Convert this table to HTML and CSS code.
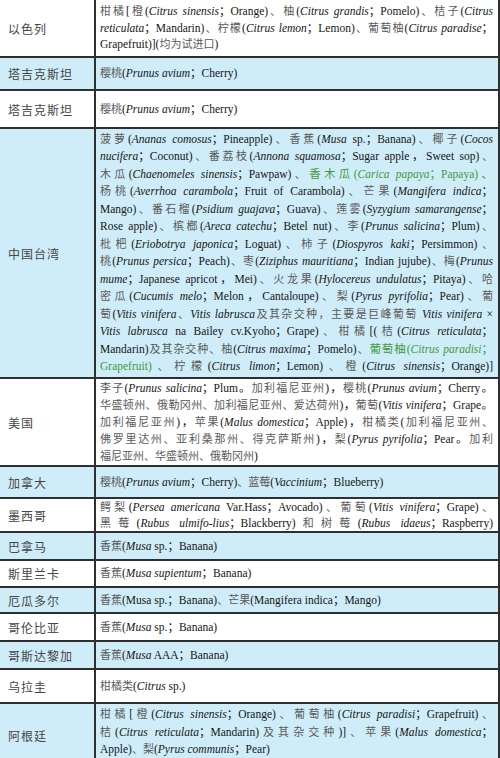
FILE: index.html
```html
<!DOCTYPE html>
<html lang="zh">
<head>
<meta charset="utf-8">
<title>准入水果</title>
<link rel="stylesheet" href="styles.css">
</head>
<body>
<div class="tbl">
  <div class="row h58">
    <div class="cty">以色列</div>
    <div class="txt lh165">
      <div class="ln"><span class="z">柑橘</span>[<span class="z">橙</span>(<i>Citrus sinensis</i>；Orange)<span class="z">、柚</span>(<i>Citrus grandis</i>；Pomelo)<span class="z">、桔子</span>(<i>Citrus</i></div>
      <div class="ln"><i>reticulata</i>；Mandarin)<span class="z">、柠檬</span>(<i>Citrus lemon</i>；Lemon)<span class="z">、葡萄柚</span>(<i>Citrus paradise</i>；</div>
      <div class="ln end">Grapefruit)](<span class="z">均为试进口</span>)</div>
    </div>
  </div>
  <div class="row b h33">
    <div class="cty">塔吉克斯坦</div>
    <div class="txt"><div class="ln end"><span class="z">樱桃</span>(<i>Prunus avium</i>；Cherry)</div></div>
  </div>
  <div class="row h38">
    <div class="cty">塔吉克斯坦</div>
    <div class="txt"><div class="ln end"><span class="z">樱桃</span>(<i>Prunus avium</i>；Cherry)</div></div>
  </div>
  <div class="row b h250">
    <div class="cty">中国台湾</div>
    <div class="txt lh175">
      <div class="ln"><span class="z">菠萝</span>(<i>Ananas comosus</i>；Pineapple)<span class="z">、香蕉</span>(<i>Musa</i> sp.；Banana)<span class="z">、椰子</span>(<i>Cocos</i></div>
      <div class="ln"><i>nucifera</i>；Coconut)<span class="z">、番荔枝</span>(<i>Annona squamosa</i>；Sugar apple，Sweet sop)<span class="z">、</span></div>
      <div class="ln"><span class="z">木瓜</span>(<i>Chaenomeles sinensis</i>；Pawpaw)<span class="z">、</span><span class="g">香木瓜(<i>Carica papaya</i>；Papaya)、</span></div>
      <div class="ln"><span class="z">杨桃</span>(<i>Averrhoa carambola</i>；Fruit of Carambola)<span class="z">、芒果</span>(<i>Mangifera indica</i>；</div>
      <div class="ln">Mango)<span class="z">、番石榴</span>(<i>Psidium guajava</i>；Guava)<span class="z">、莲雾</span>(<i>Syzygium samarangense</i>；</div>
      <div class="ln">Rose apple)<span class="z">、槟榔</span>(<i>Areca catechu</i>；Betel nut)<span class="z">、李</span>(<i>Prunus salicina</i>；Plum)<span class="z">、</span></div>
      <div class="ln"><span class="z">枇杷</span>(<i>Eriobotrya japonica</i>；Loguat)<span class="z">、柿子</span>(<i>Diospyros kaki</i>；Persimmon)<span class="z">、</span></div>
      <div class="ln"><span class="z">桃</span>(<i>Prunus persica</i>；Peach)<span class="z">、枣</span>(<i>Ziziphus mauritiana</i>；Indian jujube)<span class="z">、梅</span>(<i>Prunus</i></div>
      <div class="ln"><i>mume</i>；Japanese apricot，Mei)<span class="z">、火龙果</span>(<i>Hylocereus undulatus</i>；Pitaya)<span class="z">、哈</span></div>
      <div class="ln"><span class="z">密瓜</span>(<i>Cucumis melo</i>；Melon，Cantaloupe)<span class="z">、梨</span>(<i>Pyrus pyrifolia</i>；Pear)<span class="z">、葡</span></div>
      <div class="ln"><span class="z">萄</span>(<i>Vitis vinifera</i><span class="z">、</span><i>Vitis labrusca</i><span class="z">及其杂交种，主要是巨峰葡萄</span> <i>Vitis vinifera</i> ×</div>
      <div class="ln"><i>Vitis labrusca</i> na Bailey cv.Kyoho；Grape)<span class="z">、柑橘</span>[(<span class="z">桔</span>(<i>Citrus reticulata</i>；</div>
      <div class="ln">Mandarin)<span class="z">及其杂交种、柚</span>(<i>Citrus maxima</i>；Pomelo)<span class="z">、</span><span class="g">葡萄柚(<i>Citrus paradisi</i>；</span></div>
      <div class="ln"><span class="g">Grapefruit)</span><span class="z">、柠檬</span>(<i>Citrus limon</i>；Lemon)<span class="z">、橙</span>(<i>Citrus sinensis</i>；Orange)]</div>
    </div>
  </div>
  <div class="row h88">
    <div class="cty">美国</div>
    <div class="txt lh17">
      <div class="ln"><span class="z">李子</span>(<i>Prunus salicina</i>；Plum。<span class="z">加利福尼亚州</span>)，<span class="z">樱桃</span>(<i>Prunus avium</i>；Cherry。</div>
      <div class="ln"><span class="z">华盛顿州、俄勒冈州、加利福尼亚州、爱达荷州</span>)，<span class="z">葡萄</span>(<i>Vitis vinifera</i>；Grape。</div>
      <div class="ln"><span class="z">加利福尼亚州</span>)，<span class="z">苹果</span>(<i>Malus domestica</i>；Apple)，<span class="z">柑橘类</span>(<span class="z">加利福尼亚州、</span></div>
      <div class="ln"><span class="z">佛罗里达州、亚利桑那州、得克萨斯州</span>)，<span class="z">梨</span>(<i>Pyrus pyrifolia</i>；Pear。<span class="z">加利</span></div>
      <div class="ln end"><span class="z">福尼亚州、华盛顿州、俄勒冈州</span>)</div>
    </div>
  </div>
  <div class="row b h32">
    <div class="cty">加拿大</div>
    <div class="txt"><div class="ln end"><span class="z">樱桃</span>(<i>Prunus avium</i>；Cherry)<span class="z">、蓝莓</span>(<i>Vaccinium</i>；Blueberry)</div></div>
  </div>
  <div class="row h34">
    <div class="cty">墨西哥</div>
    <div class="txt lh16">
      <div class="ln"><span class="z">鳄梨</span>(<i>Persea americana</i> Var.Hass；Avocado)<span class="z">、葡萄</span>(<i>Vitis vinifera</i>；Grape)<span class="z">、</span></div>
      <div class="ln"><span class="z">黑莓</span>(<i>Rubus ulmifo-lius</i>；Blackberry)<span class="z">和树莓</span>(<i>Rubus idaeus</i>；Raspberry)</div>
    </div>
  </div>
  <div class="row b h28">
    <div class="cty">巴拿马</div>
    <div class="txt"><div class="ln end"><span class="z">香蕉</span>(<i>Musa</i> sp.；Banana)</div></div>
  </div>
  <div class="row h27">
    <div class="cty">斯里兰卡</div>
    <div class="txt"><div class="ln end"><span class="z">香蕉</span>(<i>Musa supientum</i>；Banana)</div></div>
  </div>
  <div class="row b h26">
    <div class="cty">厄瓜多尔</div>
    <div class="txt"><div class="ln end"><span class="z">香蕉</span>(Musa sp.；Banana)<span class="z">、芒果</span>(Mangifera indica；Mango)</div></div>
  </div>
  <div class="row h28">
    <div class="cty">哥伦比亚</div>
    <div class="txt"><div class="ln end"><span class="z">香蕉</span>(<i>Musa</i> sp.；Banana)</div></div>
  </div>
  <div class="row b h28">
    <div class="cty">哥斯达黎加</div>
    <div class="txt"><div class="ln end"><span class="z">香蕉</span>(<i>Musa</i> AAA；Banana)</div></div>
  </div>
  <div class="row h34">
    <div class="cty">乌拉圭</div>
    <div class="txt"><div class="ln end"><span class="z">柑橘类</span>(<i>Citrus</i> sp.)</div></div>
  </div>
  <div class="row b hlast">
    <div class="cty">阿根廷</div>
    <div class="txt lh175">
      <div class="ln"><span class="z">柑橘</span>[<span class="z">橙</span>(<i>Citrus sinensis</i>；Orange)<span class="z">、葡萄柚</span>(<i>Citrus paradisi</i>；Grapefruit)<span class="z">、</span></div>
      <div class="ln"><span class="z">桔</span>(<i>Citrus reticulata</i>；Mandarin)<span class="z">及其杂交种</span>)]<span class="z">、苹果</span>(<i>Malus domestica</i>；</div>
      <div class="ln end">Apple)<span class="z">、梨</span>(<i>Pyrus communis</i>；Pear)</div>
    </div>
  </div>
</div>
</body>
</html>
```

FILE: styles.css
```css
html {
  overflow: hidden;
}
body {
  margin: 0;
  background: #ffffff;
  font-family: "Liberation Serif", "Noto Sans CJK SC", serif;
  font-size: 11.5px;
  line-height: 17px;
  color: #151515;
}
.tbl {
  width: 500px;
}
.row {
  display: grid;
  grid-template-columns: 96px 1fr;
  box-sizing: border-box;
  width: 500px;
  border-bottom: 2px solid #2f2f2f;
  border-right: 2px solid #2f2f2f;
  background: #ffffff;
}
.row.b {
  background: #cfedf8;
}
.h58 { height: 58px; }
.h33 { height: 33px; }
.h38 { height: 38px; }
.h250 { height: 250px; }
.h88 { height: 88px; }
.h32 { height: 32px; }
.h34 { height: 34px; }
.h28 { height: 28px; }
.h27 { height: 27px; }
.h26 { height: 26px; }
.hlast { height: 62px; border-bottom: none; }
.cty {
  display: flex;
  align-items: center;
  padding-left: 8px;
  border-right: 2px solid #2f2f2f;
  color: #454545;
  letter-spacing: 1px;
  font-family: "Noto Sans CJK SC", sans-serif;
  font-size: 12px;
}
.txt {
  display: flex;
  flex-direction: column;
  justify-content: center;
  padding: 0 5px 0 4px;
  min-width: 0;
}
.hlast .txt {
  justify-content: flex-start;
  padding-top: 2px;
}
.lh165 { line-height: 16.5px; }
.lh175 { line-height: 17.5px; }
.lh17 { line-height: 17px; }
.lh16 { line-height: 16px; }
.ln {
  white-space: nowrap;
  text-align: justify;
  text-align-last: justify;
}
.ln.end {
  text-align-last: left;
}
.z {
  color: #5a5a5a;
  font-size: 11px;
}
.g {
  color: #3f9a3a;
}
i {
  font-style: italic;
}
```
